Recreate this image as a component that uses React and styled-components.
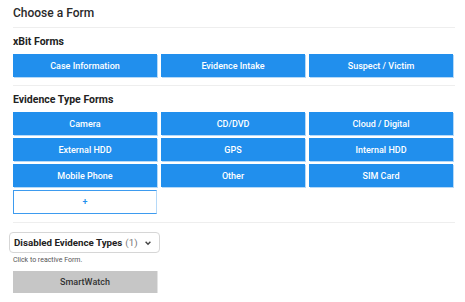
import React from "react";
import styled, { createGlobalStyle } from "styled-components";

const xbitForms = ["Case Information", "Evidence Intake", "Suspect / Victim"];
const evidenceForms = [
  "Camera",
  "CD/DVD",
  "Cloud / Digital",
  "External HDD",
  "GPS",
  "Internal HDD",
  "Mobile Phone",
  "Other",
  "SIM Card",
];
const disabledTypes = ["SmartWatch"];

const App = () => {
  return (
    <>
      <GlobalStyle />
      <Page>
        <Title>Choose a Form</Title>
        <Divider />
        <Section>
          <SubTitle>xBit Forms</SubTitle>
          <Grid>
            {xbitForms.map((f) => (
              <FormButton key={f}>{f}</FormButton>
            ))}
          </Grid>
        </Section>
        <Divider />
        <Section>
          <SubTitle>Evidence Type Forms</SubTitle>
          <Grid>
            {evidenceForms.map((f) => (
              <FormButton key={f}>{f}</FormButton>
            ))}
            <AddButton>+</AddButton>
          </Grid>
        </Section>
        <Divider />
        <Disabled>
          <Toggle>
            <strong>Disabled Evidence Types</strong>
            <Count>(1)</Count>
            <Chevron viewBox="0 0 10 10">
              <path d="M2 3.5 L5 6.5 L8 3.5" />
            </Chevron>
          </Toggle>
          <Hint>Click to reactive Form.</Hint>
          <Grid>
            {disabledTypes.map((f) => (
              <DisabledButton key={f}>{f}</DisabledButton>
            ))}
          </Grid>
        </Disabled>
      </Page>
    </>
  );
};

const GlobalStyle = createGlobalStyle`
  body {
    margin: 0;
    background: #fff;
    font-family: Roboto, "Liberation Sans", sans-serif;
    color: #222;
  }
`;

const Page = styled.div`
  padding: 5px 10px 0 13px;
`;

const Title = styled.h1`
  margin: 0 0 6px 0;
  font-size: 12px;
  font-weight: 500;
  line-height: 16px;
  color: #2a2a2a;
`;

const Divider = styled.hr`
  border: none;
  border-top: 1px solid #eeeeee;
  margin: 0;
`;

const Section = styled.div`
  padding: 8px 0;
`;

const SubTitle = styled.h2`
  margin: 0 0 6px 0;
  font-size: 10.5px;
  font-weight: 700;
  line-height: 12px;
  color: #222;
`;

const Grid = styled.div`
  display: grid;
  grid-template-columns: repeat(3, 144px);
  column-gap: 4px;
  row-gap: 3px;
`;

const FormButton = styled.button`
  height: 23px;
  border: none;
  background: #218fed;
  color: #fff;
  font-family: Roboto, "Liberation Sans", sans-serif;
  font-size: 9px;
  font-weight: 500;
  box-shadow: 1px 1px 0 #b5d9f8;
  padding: 0;
  cursor: pointer;
`;

const AddButton = styled(FormButton)`
  height: 24px;
  background: #fff;
  color: #218fed;
  border: 1px solid #3d9bef;
  border-right-color: #b5d9f8;
  box-shadow: none;
`;

const Disabled = styled.div`
  padding-top: 8px;
`;

const Toggle = styled.button`
  display: inline-flex;
  align-items: center;
  white-space: nowrap;
  margin-left: -4px;
  height: 21px;
  padding: 0 7px 0 4px;
  background: #fff;
  border: 1px solid #d6d6d6;
  border-radius: 4px;
  font-family: Roboto, "Liberation Sans", sans-serif;
  font-size: 9.75px;
  color: #222;
  strong {
    font-weight: 700;
  }
`;

const Count = styled.span`
  color: #777;
  margin-left: 3px;
`;

const Chevron = styled.svg`
  width: 8px;
  height: 8px;
  margin-left: 6px;
  fill: none;
  stroke: #444;
  stroke-width: 1.8;
`;

const Hint = styled.div`
  font-size: 7px;
  line-height: 9px;
  color: #555;
  margin: 3px 0 6px;
`;

const DisabledButton = styled(FormButton)`
  background: #c6c6c6;
  color: #333;
  height: 22px;
  box-shadow: 1px 0 0 #e3e3e3;
`;

export default App;
